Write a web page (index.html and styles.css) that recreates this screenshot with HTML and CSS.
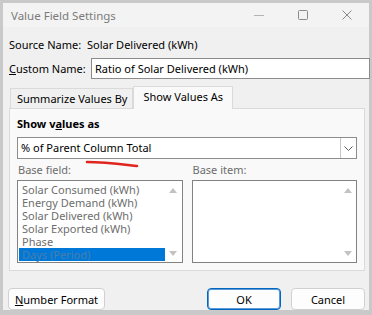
FILE: index.html
```html
<!DOCTYPE html>
<html lang="en">
<head>
    <meta charset="UTF-8">
    <meta name="viewport" content="width=device-width, initial-scale=1.0">
    <title>Value Field Settings</title>
    <link rel="stylesheet" href="styles.css">
</head>
<body>
    <div class="dialog">
        <div class="titlebar">
            <span class="title">Value Field Settings</span>
            <div class="controls">
                <div class="ctl"><svg width="10" height="10"><line x1="0" y1="5.5" x2="10" y2="5.5" stroke="#b4b4b4" stroke-width="1"/></svg></div>
                <div class="ctl"><svg width="10" height="10"><rect x="0.5" y="0.5" width="9" height="9" rx="1" fill="none" stroke="#8a8a8a" stroke-width="1"/></svg></div>
                <div class="ctl"><svg width="10" height="10"><path d="M0.5 0.5 L9.5 9.5 M9.5 0.5 L0.5 9.5" stroke="#8a8a8a" stroke-width="1"/></svg></div>
            </div>
        </div>

        <div class="row source">
            <span class="label">Source Name:</span>
            <span>Solar Delivered (kWh)</span>
        </div>
        <div class="row custom">
            <span class="label"><u>C</u>ustom Name:</span>
            <div class="textbox">Ratio of Solar Delivered (kWh)</div>
        </div>

        <div class="tabs">
            <div class="tab">Summarize Values By</div>
            <div class="tab active">Show Values As</div>
        </div>
        <div class="panel">
            <div class="heading">Show v<u>a</u>lues as</div>
            <div class="combo">
                <span class="combo-text">% of Parent Column Total</span>
                <span class="combo-btn"><svg width="9" height="5"><path d="M0.5 0.5 L4.5 4.5 L8.5 0.5" fill="none" stroke="#606060" stroke-width="1"/></svg></span>
            </div>
            <div class="lists">
                <div class="col">
                    <div class="sub">Base field:</div>
                    <div class="listbox">
                        <div class="items">
                            <div class="item">Solar Consumed (kWh)</div>
                            <div class="item">Energy Demand (kWh)</div>
                            <div class="item">Solar Delivered (kWh)</div>
                            <div class="item">Solar Exported (kWh)</div>
                            <div class="item">Phase</div>
                            <div class="item selected">Days (Period)</div>
                        </div>
                        <div class="scroll">
                            <span class="arrow up"></span>
                            <span class="arrow down"></span>
                        </div>
                    </div>
                </div>
                <div class="col">
                    <div class="sub">Base item:</div>
                    <div class="listbox">
                        <div class="items"></div>
                        <div class="scroll">
                            <span class="arrow up"></span>
                            <span class="arrow down"></span>
                        </div>
                    </div>
                </div>
            </div>
        </div>

        <div class="buttons">
            <button class="btn wide"><u>N</u>umber Format</button>
            <div class="right">
                <button class="btn default">OK</button>
                <button class="btn">Cancel</button>
            </div>
        </div>

        <svg class="mark" width="60" height="10"><path d="M3 3 C 20 3, 35 5, 53 7" fill="none" stroke="#e0251f" stroke-width="2.6" stroke-linecap="round"/></svg>
    </div>
</body>
</html>
```

FILE: styles.css
```css
body {
    margin: 0;
    padding: 3px 3px 5px 3px;
    background-color: #c9c9c9;
    font-family: "Noto Sans", sans-serif;
    font-size: 11px;
    color: #000;
    white-space: nowrap;
}
.dialog {
    position: relative;
    width: 366px;
    height: 307px;
    background-color: #f0f0f0;
}
.titlebar {
    height: 24px;
    display: flex;
    align-items: center;
    justify-content: space-between;
    padding-left: 8px;
    background-color: #f3f3f3;
}
.title {
    color: #7b7b7b;
    font-size: 11.5px;
}
.controls {
    display: flex;
    height: 100%;
}
.ctl {
    width: 44px;
    display: flex;
    align-items: center;
    justify-content: center;
}
.row {
    display: flex;
    align-items: center;
    padding-left: 6px;
}
.source {
    margin-top: 9px;
    height: 16px;
}
.source .label {
    width: 78px;
}
.custom {
    margin-top: 6px;
    height: 21px;
}
.custom .label {
    width: 82px;
}
.textbox {
    flex: 1;
    height: 21px;
    box-sizing: border-box;
    border: 1px solid #8c8c8c;
    background-color: #fff;
    padding-left: 3px;
    line-height: 19px;
    margin-right: -1px;
}
.tabs {
    display: flex;
    align-items: flex-end;
    margin-top: 7px;
    padding-left: 7px;
    height: 22px;
}
.tab {
    height: 20px;
    box-sizing: border-box;
    padding: 0 5px 0 6px;
    border: 1px solid #dadada;
    border-bottom: none;
    line-height: 20px;
    background-color: #f0f0f0;
}
.tab.active {
    height: 23px;
    margin-bottom: -1px;
    padding: 0 9px;
    background-color: #f9f9f9;
    border-left: 1px solid #dadada;
    position: relative;
    z-index: 1;
    line-height: 20px;
}
.panel {
    margin: 0 4px 0 6px;
    height: 163px;
    box-sizing: border-box;
    border: 1px solid #dadada;
    background-color: #f9f9f9;
    padding: 7px 7px 0 7px;
}
.heading {
    font-weight: bold;
    height: 16px;
    line-height: 16px;
}
.combo {
    margin-top: 5px;
    height: 22px;
    box-sizing: border-box;
    border: 1px solid #8c8c8c;
    background-color: #fff;
    display: flex;
    justify-content: space-between;
}
.combo-text {
    padding-left: 3px;
    line-height: 20px;
}
.combo-btn {
    width: 15px;
    border-left: 1px solid #c5c5c5;
    display: flex;
    align-items: center;
    justify-content: center;
}
.lists {
    display: flex;
    gap: 9px;
    margin-top: 3px;
}
.col {
    width: 166px;
}
.sub {
    color: #6d6d6d;
    height: 16px;
    line-height: 16px;
    padding-left: 1px;
}
.listbox {
    margin-top: 2px;
    height: 83px;
    box-sizing: border-box;
    border: 1px solid #828282;
    background-color: #fff;
    display: flex;
}
.items {
    flex: 1;
    padding: 2px 0 0 1px;
}
.item {
    height: 13px;
    line-height: 13px;
    padding-left: 3px;
    color: #6d6d6d;
}
.item.selected {
    background-color: #0078d7;
    color: #4a7eae;
}
.scroll {
    width: 17px;
    display: flex;
    flex-direction: column;
    justify-content: space-between;
    align-items: center;
    padding: 7px 0 6px 0;
}
.arrow {
    width: 0;
    height: 0;
    border-left: 4px solid transparent;
    border-right: 4px solid transparent;
}
.arrow.up {
    border-bottom: 5px solid #c2c2c2;
}
.arrow.down {
    border-top: 5px solid #c2c2c2;
}
.buttons {
    display: flex;
    justify-content: space-between;
    margin-top: 17px;
    padding: 0 4px 0 5px;
}
.right {
    display: flex;
    gap: 10px;
}
.btn {
    height: 22px;
    width: 74px;
    font-family: "Noto Sans", sans-serif;
    font-size: 11px;
    color: #000;
    background-color: #fdfdfd;
    border: 1px solid #d0d0d0;
    border-radius: 4px;
    padding: 0;
}
.btn.wide {
    width: 97px;
}
.btn.default {
    border: 1px solid #0067c0;
    box-shadow: inset 0 0 0 1px #5a98d6;
}
.mark {
    position: absolute;
    left: 81px;
    top: 156px;
}
```
